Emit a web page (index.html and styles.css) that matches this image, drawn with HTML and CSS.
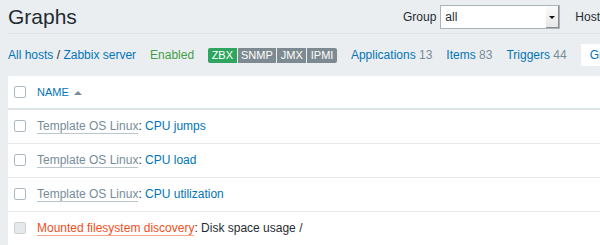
FILE: index.html
```html
<!DOCTYPE html>
<html lang="en">
<head>
    <meta charset="UTF-8">
    <title>Graphs</title>
    <link rel="stylesheet" href="styles.css">
</head>
<body>
    <div class="page">
        <div class="header">
            <h1 class="title">Graphs</h1>
            <div class="filter">
                <label class="filter-label">Group</label>
                <div class="select"><span class="select-value">all</span><span class="select-arrow"></span></div>
                <label class="filter-label host-label">Host</label>
                <div class="select"><span class="select-value">Zabbix server</span><span class="select-arrow"></span></div>
            </div>
        </div>

        <div class="host-nav">
            <div class="breadcrumbs"><a class="link" href="#">All hosts</a> / <a class="link" href="#">Zabbix server</a></div>
            <span class="status-enabled">Enabled</span>
            <div class="tags">
                <span class="tag tag-on">ZBX</span>
                <span class="tag">SNMP</span>
                <span class="tag">JMX</span>
                <span class="tag">IPMI</span>
            </div>
            <div><a class="link" href="#">Applications</a> <span class="count">13</span></div>
            <div><a class="link" href="#">Items</a> <span class="count">83</span></div>
            <div><a class="link" href="#">Triggers</a> <span class="count">44</span></div>
            <div class="tab-active"><span class="tab-text">Graphs</span> <span class="count">7</span></div>
        </div>

        <table class="list-table">
            <thead>
                <tr>
                    <th class="cell-check"><span class="checkbox"></span></th>
                    <th><a class="sort-link" href="#">Name</a><span class="sort-arrow"></span></th>
                </tr>
            </thead>
            <tbody>
                <tr>
                    <td class="cell-check"><span class="checkbox"></span></td>
                    <td><a class="link-alt grey" href="#">Template OS Linux</a>: <a class="link" href="#">CPU jumps</a></td>
                </tr>
                <tr>
                    <td class="cell-check"><span class="checkbox"></span></td>
                    <td><a class="link-alt grey" href="#">Template OS Linux</a>: <a class="link" href="#">CPU load</a></td>
                </tr>
                <tr>
                    <td class="cell-check"><span class="checkbox"></span></td>
                    <td><a class="link-alt grey" href="#">Template OS Linux</a>: <a class="link" href="#">CPU utilization</a></td>
                </tr>
                <tr>
                    <td class="cell-check"><span class="checkbox disabled"></span></td>
                    <td><a class="link-alt orange" href="#">Mounted filesystem discovery</a>: Disk space usage /</td>
                </tr>
            </tbody>
        </table>
    </div>
</body>
</html>
```

FILE: styles.css
```css
* {
    box-sizing: border-box;
}

body {
    margin: 0;
    background: #ebeef0;
    color: #1f2c33;
    font-family: 'Liberation Sans', Arial, sans-serif;
    font-size: 12px;
    overflow: hidden;
}

a {
    text-decoration: none;
}

.page {
    width: 732px;
    padding: 0 8px;
}

.header {
    display: flex;
    align-items: center;
    height: 34px;
    border-bottom: 1px solid #dde3e6;
}

.title {
    margin: 0;
    font-size: 21px;
    font-weight: normal;
    line-height: 25px;
}

.filter {
    margin-left: auto;
    display: flex;
    align-items: center;
}

.filter-label {
    margin-right: 4px;
}

.host-label {
    margin-left: 15px;
}

.select {
    display: flex;
    align-items: stretch;
    width: 120px;
    height: 24px;
    background: #fff;
    border: 1px solid #a9b4ba;
}

.select-value {
    flex: 1;
    padding-left: 4px;
    line-height: 22px;
    color: #1f2c33;
}

.select-arrow {
    position: relative;
    width: 13px;
    background: linear-gradient(#fbfbfb, #e6e6e6);
    box-shadow: inset -1px -1px 0 #8c8c8c;
}

.select-arrow::after {
    content: "";
    position: absolute;
    left: 3px;
    top: 10px;
    border-left: 3px solid transparent;
    border-right: 3px solid transparent;
    border-top: 3px solid #111;
}

.host-nav {
    display: flex;
    align-items: center;
    gap: 14px;
    height: 42px;
    white-space: nowrap;
}

.link {
    color: #0275b8;
}

.status-enabled {
    color: #429e47;
}

.count {
    color: #768d99;
}

.tags {
    display: flex;
    gap: 1px;
    border-radius: 2px;
    overflow: hidden;
}

.tag {
    background: #7e8a91;
    color: #fff;
    font-size: 11px;
    line-height: 15px;
    padding: 0 3.5px;
}

.tag-on {
    background: #2fa65f;
}

.tab-active {
    background: #fff;
    height: 22px;
    line-height: 22px;
    padding: 0 9px;
}

.tab-text {
    color: #0275b8;
}

.list-table {
    width: 100%;
    background: #fff;
    border-collapse: collapse;
}

.list-table th {
    height: 33px;
    text-align: left;
    font-weight: normal;
    border-bottom: 2px solid #dfe4e7;
    padding: 0;
}

.list-table td {
    height: 34px;
    border-bottom: 1px solid #e8ebed;
    padding: 0;
}

.cell-check {
    width: 29px;
    padding-left: 6px !important;
    line-height: 0;
}

.checkbox {
    display: inline-block;
    width: 12px;
    height: 12px;
    border: 1px solid #acbbc2;
    border-radius: 2px;
    background: #fff;
}

.checkbox.disabled {
    background: #e6e9eb;
    border-color: #c8cfd3;
}

.sort-link {
    color: #0275b8;
    text-transform: uppercase;
    font-size: 11px;
}

.sort-arrow {
    display: inline-block;
    margin-left: 5px;
    vertical-align: 1px;
    border-left: 4px solid transparent;
    border-right: 4px solid transparent;
    border-bottom: 4px solid #768d99;
}

.link-alt {
    border-bottom: 1px solid;
}

.link-alt.grey {
    color: #768d99;
    border-bottom-color: rgba(118, 141, 153, 0.5);
}

.link-alt.orange {
    color: #f24f1d;
    border-bottom-color: rgba(242, 79, 29, 0.5);
}
```
